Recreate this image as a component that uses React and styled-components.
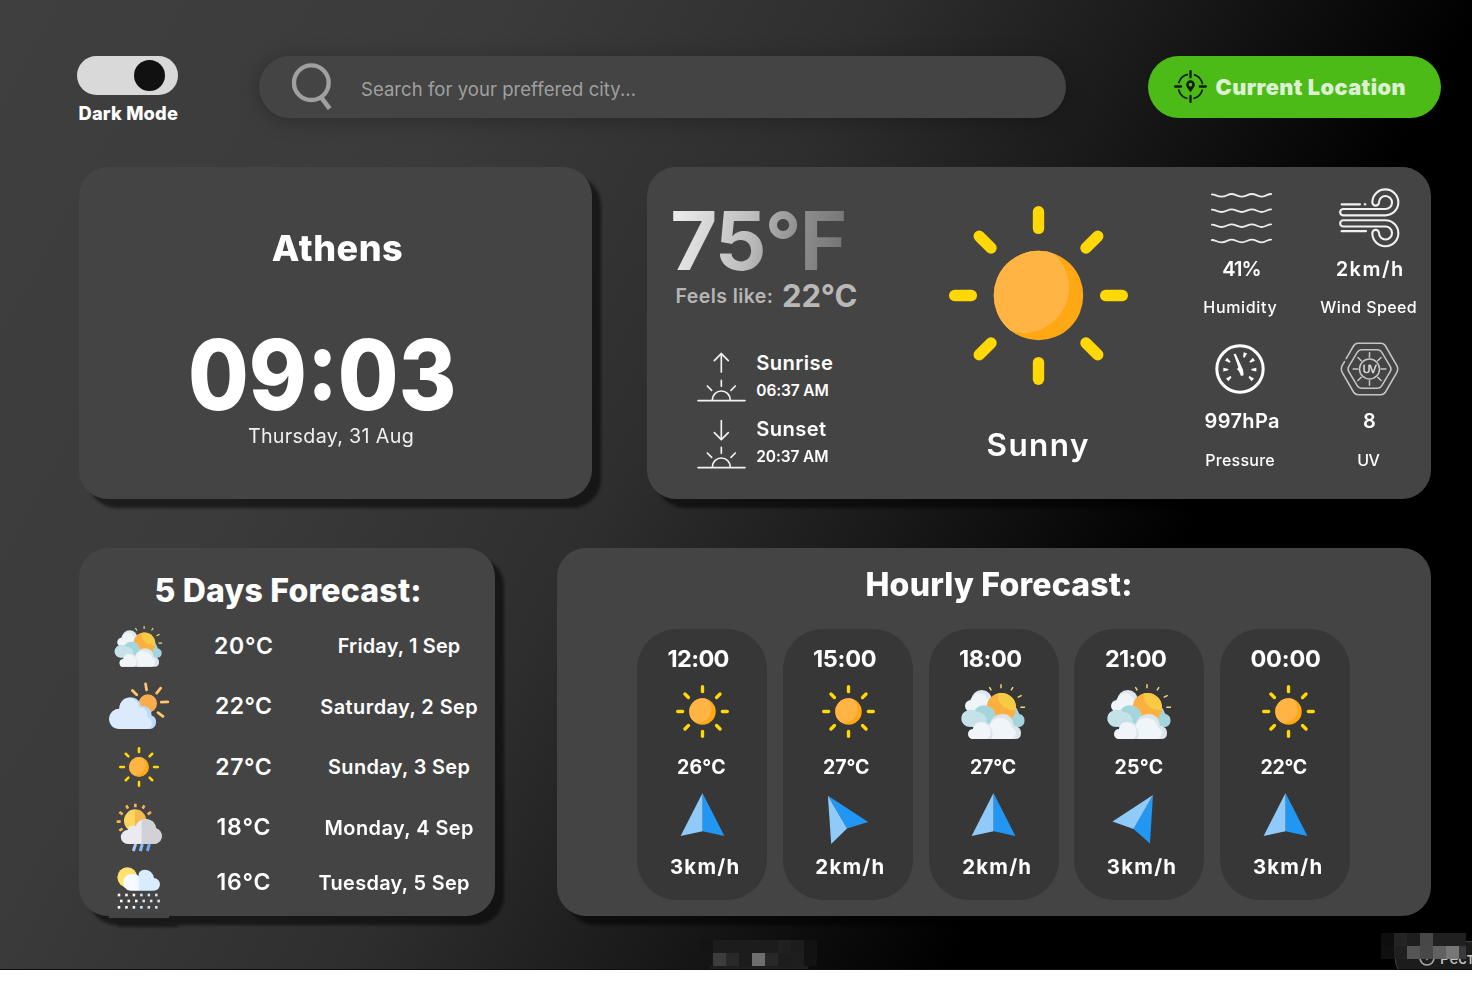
import React from 'react';
import styled, { createGlobalStyle } from 'styled-components';

const GlobalStyle = createGlobalStyle`
  *, *::before, *::after { box-sizing: border-box; }
  body { margin: 0; background: #fff; font-family: Inter, "Liberation Sans", sans-serif; color: #fff; }
`;

/* ---------- layout ---------- */

const Screen = styled.div`
  position: relative;
  width: 1472px;
  height: 970px;
  overflow: hidden;
  padding: 55.5px 0 0 77px;
  border-bottom: 1px solid #140c0f;
  background: linear-gradient(119deg, #3f3f3f 0%, #3b3b3b 25%, #2e2e2e 44%, #1a1a1a 58%, #000 74%);
`;

const Header = styled.header`
  display: flex;
  align-items: flex-start;
  height: 62.5px;
`;

const Row = styled.div`
  display: flex;
  justify-content: space-between;
  width: 1352px;
  margin: ${(p) => p.$top}px 0 0 2px;
`;

const Card = styled.section`
  width: ${(p) => p.$w}px;
  height: ${(p) => p.$h}px;
  border-radius: 29px;
  background: #444;
  filter: drop-shadow(9px 9px 1.5px rgba(0, 0, 0, 0.52));
  display: flex;
  flex-direction: ${(p) => (p.$row ? 'row' : 'column')};
  align-items: ${(p) => (p.$row ? 'flex-start' : 'center')};
`;

const Text = styled.div`
  flex: none;
  white-space: nowrap;
  font-size: ${(p) => p.$size}px;
  font-weight: ${(p) => p.$weight || 500};
  line-height: ${(p) => p.$lh || 24}px;
  letter-spacing: ${(p) => p.$ls || 0}px;
  color: ${(p) => p.$color || '#fff'};
  margin-top: ${(p) => p.$mt || 0}px;
  margin-left: ${(p) => (p.$dx || 0) * 2}px;
  margin-right: ${(p) => -(p.$ls || 0)}px;
`;

/* ---------- header ---------- */

const ModeSwitch = styled.div`
  width: 182px;
`;

const SwitchTrack = styled.div`
  width: 100.5px;
  height: 39px;
  border-radius: 20px;
  background: #d9d9d9;
  display: flex;
  align-items: center;
  justify-content: flex-end;
  padding-right: 13px;
`;

const SwitchKnob = styled.div`
  width: 31px;
  height: 31px;
  border-radius: 50%;
  background: #111;
`;

const SearchBar = styled.div`
  display: flex;
  align-items: center;
  width: 807px;
  height: 62.5px;
  padding: 0 0 1px 32px;
  border-radius: 32px;
  background: #444;
  box-shadow: 0 3px 20px rgba(0, 0, 0, 0.26);
`;

const LocationButton = styled.div`
  display: flex;
  align-items: center;
  width: 293.5px;
  height: 62.5px;
  margin-left: 81.5px;
  padding-left: 26px;
  gap: 9px;
  border-radius: 32px;
  background: #4cbb17;
`;

/* ---------- cards ---------- */

const Clock = styled(Text)`
  transform: scaleX(0.906);
`;

const BigTemp = styled(Text)`
  background: linear-gradient(100deg, #f0f0f0 0%, #bdbdbd 45%, #8f8f8f 70%, #707070 100%);
  background-clip: text;
  -webkit-background-clip: text;
  color: transparent;
`;

const TempColumn = styled.div`
  width: 252px;
  padding-top: 34px;
`;

const FeelsRow = styled.div`
  display: flex;
  align-items: center;
  gap: 9px;
  padding-left: 28.5px;
`;

const SunRow = styled.div`
  display: flex;
  padding-left: 50px;
  margin-top: ${(p) => p.$mt}px;
  gap: 10px;
  height: 50px;
`;

const SunTimes = styled.div`
  display: flex;
  flex-direction: column;
  align-items: flex-start;
`;

const SkyColumn = styled.div`
  width: 279px;
  padding-top: 39px;
  display: flex;
  flex-direction: column;
  align-items: center;
`;

const Metrics = styled.div`
  display: grid;
  grid-template-columns: 126px 127px;
  row-gap: 22px;
  padding-top: 21px;
`;

const Metric = styled.div`
  display: flex;
  flex-direction: column;
  align-items: center;
`;

const IconBox = styled.div`
  height: 60px;
  display: flex;
  align-items: center;
  justify-content: center;
  margin-left: ${(p) => (p.$dx || 0) * 2}px;
  margin-top: ${(p) => p.$mt || 0}px;
`;

const DayList = styled.div`
  flex: none;
  align-self: flex-start;
  margin: 4.7px 0 0 30px;
`;

const DayRow = styled.div`
  display: grid;
  grid-template-columns: 60px 149px 162px;
  align-items: center;
  justify-items: center;
  height: 60.5px;
`;

const DayIcon = styled.div`
  display: flex;
  align-items: center;
  justify-content: center;
  width: 60px;
  height: 60px;
  background: #444;
`;

const Hours = styled.div`
  display: flex;
  align-self: flex-start;
  gap: 15.8px;
  margin: 24px 0 0 80px;
`;

const HourTile = styled.div`
  display: flex;
  flex-direction: column;
  align-items: center;
  width: 130px;
  height: 270.5px;
  padding-top: 15px;
  border-radius: 40px;
  background: #373737;
`;

/* ---------- overlays at the bottom edge ---------- */

const Mosaic = styled.div`
  position: absolute;
  z-index: 2;
  left: ${(p) => p.$x}px;
  top: ${(p) => p.$y}px;
  display: grid;
  grid-template-columns: ${(p) => p.$cols};
  grid-auto-rows: 13px;
`;

const Tile = styled.i`
  background: ${(p) => p.$c};
`;

const BottomTab = styled.div`
  position: absolute;
  left: 708px;
  top: 946px;
  width: 102px;
  height: 29px;
  border-radius: 14px;
  background: #1e1e1e;
`;

const CornerTab = styled.div`
  position: absolute;
  left: 1395px;
  top: 941px;
  width: 110px;
  height: 37px;
  border: 1px solid #444;
  border-radius: 18px;
  background: #1c1c1c;
  display: flex;
  align-items: flex-start;
  gap: 5px;
  padding: 7px 0 0 23px;
`;

/* ---------- icons ---------- */

const SearchIcon = () => (
  <svg width="43" height="48" viewBox="693 65 129 144" fill="none" stroke="#a0a0a0">
    <circle cx="754" cy="127" r="52" strokeWidth="13" />
    <path d="M784 172L809 205" strokeWidth="14" />
  </svg>
);

const TargetIcon = () => (
  <svg width="33" height="33" viewBox="-49.5 -49.5 99 99" fill="none" stroke="#0d1a08">
    <circle r="37" strokeWidth="5" strokeDasharray="40 18.12" strokeDashoffset="-9.06" />
    <path d="M0 -46V-28 M0 46V28 M-46 0H-28 M46 0H28" strokeWidth="7" strokeLinecap="round" />
    <path
      d="M0 18C-4 9 -13 3 -13 -6A13 13 0 0 1 13 -6C13 3 4 9 0 18Z M0 -11A5.5 5.5 0 1 0 0 0A5.5 5.5 0 1 0 0 -11Z"
      fill="#0d1a08"
      fillRule="evenodd"
      stroke="none"
    />
  </svg>
);

const RAYS = [0, 45, 90, 135, 180, 225, 270, 315];

const Sun = ({ size }) => (
  <svg width={size} height={size} viewBox="-268 -268 536 536">
    <clipPath id={`disc${size}`}>
      <circle r="134" />
    </clipPath>
    <circle r="134" fill="#ffa814" />
    <circle cx="-46" cy="-24" r="137" fill="#ffb444" clipPath={`url(#disc${size})`} />
    {RAYS.map((a) => (
      <path
        key={a}
        d="M0 -251V-201"
        stroke="#ffd805"
        strokeWidth="34"
        strokeLinecap="round"
        transform={`rotate(${a})`}
      />
    ))}
  </svg>
);

const HorizonIcon = ({ down }) => (
  <svg
    width="49.3"
    height="50"
    viewBox="111 484 148 150"
    fill="none"
    stroke="#f2f2f2"
    strokeWidth="5"
    strokeLinecap="round"
  >
    <path d="M184 489V544" />
    <path d={down ? 'M163 525L184 546L205 525' : 'M163 510L184 489L205 510'} strokeLinejoin="round" />
    <path d="M114 630H255M157 628A27 27 0 0 1 211 628M184 569V587M142 586L155 599M226 586L213 599" />
  </svg>
);

const wave = (y) =>
  `M97 ${y - 1}C107 ${y - 2} 112 ${y + 6} 126 ${y + 6}S145 ${y - 2} 156 ${y - 2}S176 ${y + 6} 187 ${y + 6}` +
  `S206 ${y - 2} 217 ${y - 2}S237 ${y + 6} 247 ${y + 6}S264 ${y - 2} 275 ${y - 2}`;

const HumidityIcon = () => (
  <svg width="61" height="52" viewBox="94.5 65 183 156" fill="none" stroke="#ededed" strokeWidth="5.4" strokeLinecap="round">
    {[73, 119, 164, 210].map((y) => (
      <path key={y} d={wave(y)} />
    ))}
  </svg>
);

const CURL =
  'M617 136A39 39 0 1 0 578 97A10 10 0 0 0 598 97A19.5 19.5 0 1 1 617 117H491A9.5 9.5 0 0 0 491 136Z';

const WindIcon = () => (
  <svg width="61" height="60.7" viewBox="478 54 183 182" fill="none" stroke="#f0f0f0" strokeWidth="6.4" strokeLinecap="round">
    <path d={CURL} />
    <path d={CURL} transform="translate(0 286.6) scale(1 -1)" />
    <path d="M486 103H541M555 103H557M486 183.5H559" />
  </svg>
);

const GAUGE_TICKS = [
  [-43, 2, 180],
  [-36, -25, 215],
  [14, -42, 289],
  [36, -25, 325],
  [42, 2, 0],
  [33, 28, 40],
  [-33, 28, 140],
];

const PressureIcon = () => (
  <svg width="50" height="50" viewBox="-75 -75 150 150">
    <circle r="69.5" fill="none" stroke="#fff" strokeWidth="9" />
    {GAUGE_TICKS.map(([x, y, a]) => (
      <path key={a} d="M-8 -2L7 -5.5V5.5L-8 2Z" fill="#fff" transform={`translate(${x} ${y}) rotate(${a})`} />
    ))}
    <path d="M-19 -45L-13 -46L5 -7L9 2L11 19L3 21L-3 7L-9 1L-5 -5Z" fill="#fff" />
  </svg>
);

const UvIcon = () => (
  <svg width="59" height="54" viewBox="-88.5 -81 177 162" fill="none" stroke="#c6c6c6" strokeWidth="4.6" strokeLinecap="round">
    <path d="M-34 -77H34Q43 -77 48 -69L82 -10Q87 0 82 10L48 69Q43 77 34 77H-34Q-43 77 -48 69L-82 10Q-87 0 -82 -10L-75 -22M-70 -31L-48 -69Q-43 -77 -34 -77" />
    <path d="M-23 -58H23Q32 -58 37 -50L62 -8Q67 0 62 8L37 50Q32 58 23 58H-23Q-32 58 -37 50L-62 8Q-67 0 -62 -8L-37 -50Q-32 -58 -23 -58Z" />
    <circle r="30" />
    {RAYS.map((a) => (
      <path key={a} d="M0 -35V-49" transform={`rotate(${a})`} />
    ))}
    <text
      x="-1"
      y="11.5"
      textAnchor="middle"
      fontFamily="Liberation Sans, sans-serif"
      fontSize="32"
      letterSpacing="-3"
      fill="#e0e0e0"
      stroke="#e0e0e0"
      strokeWidth="1.2"
    >
      UV
    </text>
  </svg>
);

const SunBehindClouds = ({ w, id }) => (
  <svg width={w} height={(w * 170) / 194} viewBox="994 369 194 170" overflow="visible">
    <clipPath id={id}>
      <circle cx="1112" cy="443" r="44" />
    </clipPath>
    <circle cx="1053" cy="421" r="31" fill="#dde6ee" />
    <circle cx="1046" cy="426" r="27" fill="#eff4f8" />
    <circle cx="1021" cy="438" r="18" fill="#eff4f8" />
    <path d="M1120 500L1150 436Q1162 448 1166 462A20 20 0 0 1 1166 501Z" fill="#a4d4dc" />
    <circle cx="1112" cy="443" r="44" fill="#fdb040" />
    <circle cx="1147" cy="404" r="46" fill="#f6ca43" clipPath={`url(#${id})`} />
    <path d="M1030 455A34 34 0 0 1 1093 460Q1102 480 1090 500H1022A25 25 0 1 1 1026 451Z" fill="#a4d4dc" />
    <path d="M1022 451Q1032 447 1040 456Q1066 458 1068 484L1060 500H1022A25 25 0 1 1 1022 451Z" fill="#c5e2e8" />
    <path
      d="M1028 537A15 15 0 0 1 1027 507Q1031 484 1056 485Q1070 486 1076 493Q1086 462 1116 462Q1146 463 1150 497Q1171 500 1171 518Q1171 537 1154 537Z"
      fill="#dbe6eb"
    />
    <path
      d="M1028 537A15 15 0 0 1 1027 507Q1030 486 1052 487Q1078 492 1080 516Q1080 530 1070 537Z M1076 497Q1086 471 1112 474Q1140 477 1144 503Q1160 511 1154 526Q1150 537 1140 537H1082Q1092 518 1076 497Z"
      fill="#f0f5f9"
    />
    <path
      d="M1111 373V385M1076 381L1082 391M1147 381L1141 391M1173 406L1161 412M1169 442H1183"
      stroke="#f0da80"
      strokeWidth="4.4"
      fill="none"
    />
  </svg>
);

const CloudAndSun = () => (
  <svg width="61" height="48" viewBox="116.5 369.5 183 144">
    <circle cx="235" cy="434" r="28" fill="#f7ad4e" />
    <path
      d="M228 374L231 392M274 387L262 402M276 430L296 429M266 462L281 473M188 394L201 407"
      stroke="#fdc76a"
      strokeWidth="8.5"
      strokeLinecap="round"
    />
    <path
      d="M148 512A31 31 0 0 1 148 450C150 405 208 405 214 442C236 440 247 455 246 470A22 22 0 0 1 243 512Z"
      fill="#bddafa"
    />
    <path
      d="M148 512A31 31 0 0 1 148 450C150 405 204 408 208 446C228 444 236 462 234 475C254 484 252 510 230 512Z"
      fill="#dbebfd"
    />
  </svg>
);

const RAIN_CLOUD = 'M173 328A21 21 0 0 1 172 286Q176 270 196 274Q206 252 227 253Q254 256 257 281A24 24 0 0 1 252 328Z';

const SunRain = () => (
  <svg width="47" height="48.7" viewBox="137 205 141 146">
    <path d="M195 224A34 34 0 0 0 195 292Z" fill="#fed65f" />
    <path d="M194 224A34 34 0 0 1 194 292Z" fill="#f8b850" />
    <path
      d="M195 207V218M168 212L173 222M222 212L217 222M147 232L157 239M242 232L232 239M139 261H151M147 288L157 282"
      stroke="#f8b44c"
      strokeWidth="8"
    />
    <clipPath id="rainRight">
      <path d="M214 240H290V340H214Z" />
    </clipPath>
    <path d={RAIN_CLOUD} fill="#ebeaf0" />
    <path d={RAIN_CLOUD} fill="#d2d1d7" clipPath="url(#rainRight)" />
    <path d="M196 328L189 349" stroke="#a8cbfb" strokeWidth="9" />
    <path d="M216 328L210 349" stroke="#8dbcf8" strokeWidth="9" />
    <path d="M237 328L231 349" stroke="#6ea8f5" strokeWidth="9" />
  </svg>
);

const SnowDots = () =>
  [480, 498, 517].flatMap((y, r) =>
    [0, 1, 2, 3, 4, 5].map((i) => {
      const x = (r === 1 ? 156 : 149) + i * 22.4;
      return <rect key={`${y}-${i}`} x={x - 3.8} y={y - 4} width="7.6" height="8" fill={x > 208 ? '#d3e6f8' : '#fff'} />;
    })
  );

const SunSnow = () => (
  <svg width="43.3" height="42.7" viewBox="143 396 130 128">
    <circle cx="174" cy="427" r="30" fill="#ffe26c" />
    <path d="M184 467A24 24 0 0 1 162 437Q168 416 190 417Q204 418 209 424V467Z" fill="#f5fbff" />
    <path d="M208 467V416Q212 404 228 404Q250 406 254 429Q272 432 272 449Q270 467 252 467Z" fill="#d8ecff" />
    <SnowDots />
  </svg>
);

const ARROWS = {
  up: { tip: '65.5,4', left: '43.6,47', right: '87.4,47', notch: '65.5,42.3' },
  leftUp: { tip: '44.9,6.7', left: '48.2,55', right: '85.2,33', notch: '64,39.5' },
  rightUp: { tip: '79,6', left: '38.5,32.5', right: '76,54.5', notch: '59.5,40' },
};

const WindArrow = ({ dir }) => {
  const a = ARROWS[dir];
  return (
    <svg width="130" height="60" viewBox="0 0 130 60">
      <polygon points={`${a.tip} ${a.right} ${a.notch}`} fill="#2196f3" />
      <polygon points={`${a.tip} ${a.left} ${a.notch}`} fill="#90caf9" />
    </svg>
  );
};

/* ---------- data ---------- */

const DAYS = [
  { icon: <SunBehindClouds w={48.3} id="sunDay" />, temp: '20°C', tls: 0.77, date: 'Friday, 1 Sep', ls: 0.18 },
  { icon: <CloudAndSun />, temp: '22°C', tls: 0.38, date: 'Saturday, 2 Sep', ls: 0.47 },
  { icon: <Sun size={40} />, temp: '27°C', tls: 0.58, date: 'Sunday, 3 Sep', ls: 0.37 },
  { icon: <SunRain />, temp: '18°C', tls: 0.86, date: 'Monday, 4 Sep', ls: 0.46 },
  { icon: <SunSnow />, temp: '16°C', tls: 0.79, date: 'Tuesday, 5 Sep', ls: 0.34, dx: -2.5, lift: -11 },
];

const HOURS = [
  { time: '12:00', hls: -0.66, hdx: -3.5, sky: 'sun', idx: 0.3, temp: '26°C', tls: 0.48, tdx: -0.7, dir: 'up', wind: '3km/h', wdx: 2.5 },
  { time: '15:00', hls: -0.29, hdx: -3, sky: 'sun', idx: 0.6, temp: '27°C', tls: 0.16, tdx: -1.6, dir: 'leftUp', wind: '2km/h', wdx: 2 },
  { time: '18:00', hls: -0.46, hdx: -3, sky: 'cloud', idx: 0.6, temp: '27°C', tls: 0.16, tdx: -0.6, dir: 'up', adx: -0.5, wind: '2km/h', wdx: 3 },
  { time: '21:00', hls: -0.66, hdx: -3.5, sky: 'cloud', idx: 0.6, temp: '25°C', tls: 0.67, tdx: -0.6, dir: 'rightUp', wind: '3km/h', wdx: 2 },
  { time: '00:00', hls: -0.17, hdx: 0.5, sky: 'sun', idx: 3, temp: '22°C', tls: 0.02, tdx: -1.4, dir: 'up', adx: -0.5, wind: '3km/h', wdx: 2.3 },
];

const METRICS = [
  { icon: <HumidityIcon />, idx: 0.5, value: '41%', vls: -0.95, vdx: 1, label: 'Humidity', ls: 0.66, dx: -1, gap: 8.5 },
  { icon: <WindIcon />, idx: 2, value: '2km/h', vls: 1.5, vdx: 2, label: 'Wind Speed', ls: 0.4, dx: 1, gap: 8.5 },
  { icon: <PressureIcon />, idx: -0.7, value: '997hPa', vls: 0.35, vdx: 1, label: 'Pressure', ls: 0.25, dx: -1, gap: 10 },
  { icon: <UvIcon />, idx: 2.3, value: '8', vls: 0, vdx: 2, label: 'UV', ls: -0.5, dx: 1, gap: 10 },
];

const MOSAIC_LEFT = [
  '#141414', '#1c1c1c', '#1c1c1c', '#1c1c1c', '#1c1c1c', '#1c1c1c', '#202020', '#1c1c1c', '#121212',
  '#151515', '#3c3c3c', '#292929', '#1c1c1c', '#6e6e6e', '#282828', '#1d1d1d', '#1e1e1e', '#121212',
];
const MOSAIC_RIGHT = [
  '#0e0e0e', '#242424', '#1e1e1e', '#474747', '#202020', '#202020', '#202020',
  '#101010', '#202020', '#555', '#484848', '#616161', '#777', '#3a3a3a',
];

export default function App() {
  return (
    <Screen>
      <GlobalStyle />
      <Header>
        <ModeSwitch>
          <SwitchTrack>
            <SwitchKnob />
          </SwitchTrack>
          <Text $size={18.3} $weight={800} $ls={0.18} $lh={20} $mt={8.8} $dx={0.75}>Dark Mode</Text>
        </ModeSwitch>
        <SearchBar>
          <SearchIcon />
          <Text $size={18.5} $weight={400} $ls={0.05} $mt={6} $dx={13.5} $color="#a0a0a0">
            Search for your preffered city...
          </Text>
        </SearchBar>
        <LocationButton>
          <TargetIcon />
          <Text $size={21.7} $weight={900} $ls={0.45} $color="#dbf1d1">Current Location</Text>
        </LocationButton>
      </Header>

      <Row $top={49}>
        <Card $w={513} $h={331.5}>
          <Text $size={36} $weight={800} $ls={0.5} $lh={44} $mt={58.5} $dx={1.7}>Athens</Text>
          <Clock $size={97} $weight={800} $lh={90} $mt={60} $dx={-13.7}>09:03</Clock>
          <Text $size={19.7} $weight={400} $ls={0.32} $lh={28} $mt={2} $dx={-4.7} $color="#f0f0f0">Thursday, 31 Aug</Text>
        </Card>

        <Card $w={784} $h={331.5} $row>
          <TempColumn>
            <FeelsRow>
              <BigTemp $size={81} $weight={700} $ls={-1.79} $lh={80} $dx={-2.6}>75°F</BigTemp>
            </FeelsRow>
            <FeelsRow>
              <Text $size={19.5} $weight={600} $ls={0.42} $lh={30} $color="#b6b6b6">Feels like:</Text>
              <Text $size={31} $weight={700} $ls={-0.1} $lh={28} $color="#b8b8b8">22°C</Text>
            </FeelsRow>
            <SunRow $mt={41}>
              <HorizonIcon />
              <SunTimes>
                <Text $size={20.2} $weight={600} $ls={0.38} $lh={22}>Sunrise</Text>
                <Text $size={15.5} $weight={600} $ls={-0.12} $lh={20} $mt={7}>06:37 AM</Text>
              </SunTimes>
            </SunRow>
            <SunRow $mt={17.3}>
              <HorizonIcon down />
              <SunTimes>
                <Text $size={20.2} $weight={600} $ls={0.35} $lh={22} $mt={-1.8}>Sunset</Text>
                <Text $size={15.5} $weight={600} $ls={-0.12} $lh={20} $mt={7}>20:37 AM</Text>
              </SunTimes>
            </SunRow>
          </TempColumn>
          <SkyColumn>
            <Sun size={179} />
            <Text $size={31.5} $weight={600} $ls={1.4} $lh={40} $mt={40} $dx={-1}>Sunny</Text>
          </SkyColumn>
          <Metrics>
            {METRICS.map((m) => (
              <Metric key={m.label}>
                <IconBox $dx={m.idx}>{m.icon}</IconBox>
                <Text $size={20} $weight={600} $ls={m.vls} $mt={m.gap} $dx={m.vdx}>{m.value}</Text>
                <Text $size={16} $weight={500} $ls={m.ls} $lh={20} $mt={16.5} $dx={m.dx}>{m.label}</Text>
              </Metric>
            ))}
          </Metrics>
        </Card>
      </Row>

      <Row $top={49.5}>
        <Card $w={416} $h={368}>
          <Text $size={32} $weight={800} $ls={0.22} $lh={40} $mt={23} $dx={1}>5 Days Forecast:</Text>
          <DayList>
            {DAYS.map((d) => (
              <DayRow key={d.date}>
                <DayIcon>{d.icon}</DayIcon>
                <Text $size={23} $weight={600} $ls={d.tls} $mt={d.lift}>{d.temp}</Text>
                <Text $size={19.9} $weight={600} $ls={d.ls} $mt={(d.lift || 0) + 1} $dx={(d.dx || 0) * 2}>{d.date}</Text>
              </DayRow>
            ))}
          </DayList>
        </Card>

        <Card $w={874} $h={368}>
          <Text $size={32} $weight={800} $ls={0.22} $lh={40} $mt={17} $dx={5}>Hourly Forecast:</Text>
          <Hours>
            {HOURS.map((h) => (
              <HourTile key={h.time}>
                <Text $size={23.5} $weight={700} $ls={h.hls} $lh={30} $dx={h.hdx}>{h.time}</Text>
                <IconBox $mt={7} $dx={h.idx}>
                  {h.sky === 'sun' ? <Sun size={53} /> : <SunBehindClouds w={64.7} id={`sun${h.time.slice(0, 2)}`} />}
                </IconBox>
                <Text $size={19.5} $weight={700} $ls={h.tls - 0.3} $mt={14} $dx={h.tdx}>{h.temp}</Text>
                <IconBox $mt={10} $dx={h.adx}>
                  <WindArrow dir={h.dir} />
                </IconBox>
                <Text $size={20.4} $weight={700} $ls={1.25} $lh={28} $mt={3.5} $dx={h.wdx}>{h.wind}</Text>
              </HourTile>
            ))}
          </Hours>
        </Card>
      </Row>

      <BottomTab />
      <Mosaic $x={700} $y={939.5} $cols="repeat(9, 13px)">
        {MOSAIC_LEFT.map((c, i) => (
          <Tile key={i} $c={c} />
        ))}
      </Mosaic>
      <CornerTab>
        <svg width="16" height="18" viewBox="0 0 16 18" fill="none" stroke="#a8a8a8" strokeWidth="1.6">
          <circle cx="8" cy="9" r="7" />
          <path d="M8 5V10L10.5 8.5" />
        </svg>
        <Text $size={15} $weight={500} $lh={19} $color="#c4c4c4">Рест</Text>
      </CornerTab>
      <Mosaic $x={1381} $y={933} $cols="repeat(6, 13px) 7px">
        {MOSAIC_RIGHT.map((c, i) => (
          <Tile key={i} $c={c} />
        ))}
      </Mosaic>
    </Screen>
  );
}
